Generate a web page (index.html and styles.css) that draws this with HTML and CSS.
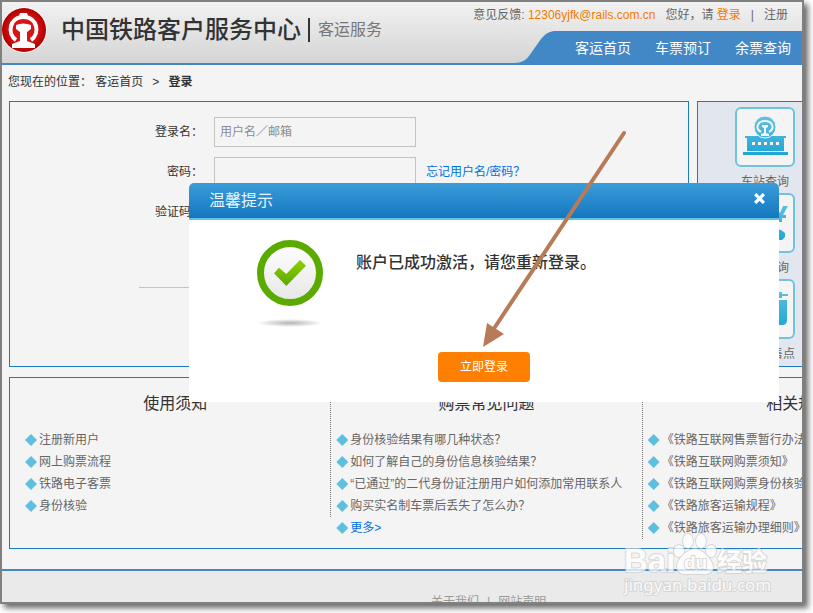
FILE: index.html
```html
<!DOCTYPE html>
<html lang="zh-CN">
<head>
    <meta charset="UTF-8">
    <meta name="viewport" content="width=device-width, initial-scale=1.0">
    <title>登录 | 客运服务</title>
    <link rel="stylesheet" href="styles.css">
</head>
<body>
    <div class="window">
        <header class="header">
            <div class="brand">
                <svg class="logo" viewBox="0 0 46 46" aria-hidden="true">
                    <defs>
                        <radialGradient id="red">
                            <stop offset="0.6" stop-color="#d81414"/>
                            <stop offset="1" stop-color="#b00000"/>
                        </radialGradient>
                    </defs>
                    <circle cx="22" cy="23" r="23" fill="#fff" opacity=".7"/>
                    <circle cx="22" cy="23" r="22" fill="url(#red)"/>
                    <path d="M17 9l1-3h7l1 3z" fill="#fff"/>
                    <path d="M14 33C5 27 7 10 21.500 10S38 27 29 33" fill="none" stroke="#fff" stroke-width="4"/>
                    <path d="M14 18q7-3 15 0v4l-4 3v9l8 3v4H10v-4l8-3v-9l-4-3z" fill="#fff"/>
                </svg>
                <h1>中国铁路客户服务中心</h1>
                <span class="sub">客运服务</span>
            </div>
            <div class="header-right">
                <div class="topline">
                    <span>意见反馈: <a href="mailto:12306yjfk@rails.com.cn">12306yjfk@rails.com.cn</a></span>
                    <span>您好，请 <a href="#">登录</a></span>
                    <span class="bar">|</span>
                    <a class="plain" href="#">注册</a>
                </div>
                <div class="nav-wrap">
                    <svg class="curve" viewBox="0 0 42 32" aria-hidden="true">
                        <path d="M0 32C8 32 12 29 15 25L27 8C32 2 36 0 42 0V32z" fill="#4288c6"/>
                    </svg>
                    <nav class="nav">
                        <a href="#">客运首页</a>
                        <a href="#">车票预订</a>
                        <a href="#">余票查询</a>
                    </nav>
                </div>
            </div>
        </header>

        <div class="crumbs">您现在的位置： <a href="#">客运首页</a><span class="arrow">&gt;</span><strong>登录</strong></div>

        <main class="content">
            <div class="top">
                <form class="login">
                    <div class="row">
                        <label for="user">登录名：</label>
                        <input type="text" id="user" placeholder="用户名／邮箱">
                    </div>
                    <div class="row">
                        <label for="pwd">密码：</label>
                        <input type="password" id="pwd">
                        <a href="#">忘记用户名/密码？</a>
                    </div>
                    <div class="row">
                        <label for="code">验证码：</label>
                        <input type="text" id="code">
                    </div>
                    <hr>
                </form>
                <aside class="side">
                    <a class="tile" href="#">
                        <svg viewBox="0 0 56 56" aria-hidden="true">
                            <defs>
                                <linearGradient id="sky" gradientUnits="userSpaceOnUse" x1="0" y1="8" x2="0" y2="48">
                                    <stop offset="0" stop-color="#62c0df"/>
                                    <stop offset="1" stop-color="#1ba5d5"/>
                                </linearGradient>
                            </defs>
                            <g fill="url(#sky)">
                                <path d="M8 27h41v2h-2v13H10V29H8z"/>
                                <path d="M6 43h45v3H6z"/>
                                <circle cx="28" cy="18" r="11" stroke="#f4f4f4" stroke-width="1"/>
                            </g>
                            <path d="M24 23c-6-3-4-11 4-11s10 8 4 11" fill="none" stroke="#f4f4f4" stroke-width="2"/>
                            <path d="M25 16h6v2l-2 1v5l3 1v2h-8v-2l3-1v-5l-2-1z" fill="#f4f4f4"/>
                            <path d="M15 33h3v3h-3zM21 33h3v3h-3zM27 33h3v3h-3zM33 33h3v3h-3zM39 33h3v3h-3z" fill="#f4f4f4"/>
                        </svg>
                        <span>车站查询</span>
                    </a>
                    <a class="tile" href="#">
                        <svg viewBox="0 0 56 56" aria-hidden="true">
                            <path d="M33 11h5l5 7 3-7h5l-5 9h3v3h-4v4h-5v-4h-5v-3h3z" fill="url(#sky)"/>
                            <path d="M8 14h20v26H8z" fill="url(#sky)"/>
                            <path d="M38 34l6 1 4 3v4l-3 3h-7z" fill="url(#sky)"/>
                        </svg>
                        <span>票价查询</span>
                    </a>
                    <a class="tile" href="#">
                        <svg viewBox="0 0 56 56" aria-hidden="true">
                            <path d="M8 14h34v-3h3v2h6v2h-6v2h-3v-1H8z" fill="url(#sky)"/>
                            <path d="M8 19h42v20q0 5-5 5H13q-5 0-5-5z" fill="url(#sky)"/>
                        </svg>
                        <span>客票代售点</span>
                    </a>
                </aside>
            </div>

            <div class="notes">
                <section class="col">
                    <h2>使用须知</h2>
                    <ul>
                        <li><a href="#">注册新用户</a></li>
                        <li><a href="#">网上购票流程</a></li>
                        <li><a href="#">铁路电子客票</a></li>
                        <li><a href="#">身份核验</a></li>
                    </ul>
                </section>
                <section class="col">
                    <h2>购票常见问题</h2>
                    <ul>
                        <li><a href="#">身份核验结果有哪几种状态？</a></li>
                        <li><a href="#">如何了解自己的身份信息核验结果？</a></li>
                        <li><a href="#">“已通过”的二代身份证注册用户如何添加常用联系人</a></li>
                        <li><a href="#">购买实名制车票后丢失了怎么办？</a></li>
                        <li><a class="more" href="#">更多&gt;</a></li>
                    </ul>
                </section>
                <section class="col">
                    <h2>相关规章</h2>
                    <ul>
                        <li><a href="#">《铁路互联网售票暂行办法》</a></li>
                        <li><a href="#">《铁路互联网购票须知》</a></li>
                        <li><a href="#">《铁路互联网购票身份核验须知》</a></li>
                        <li><a href="#">《铁路旅客运输规程》</a></li>
                        <li><a href="#">《铁路旅客运输办理细则》</a></li>
                    </ul>
                </section>
            </div>
        </main>

        <footer class="footer">
            <a href="#">关于我们</a><span>|</span><a href="#">网站声明</a>
        </footer>

        <!-- 激活成功提示框 -->
        <div class="dialog" role="dialog" aria-labelledby="dialog-title">
            <div class="dialog-head">
                <h2 id="dialog-title">温馨提示</h2>
                <button type="button" class="close" aria-label="关闭">
                    <svg viewBox="0 0 10 10" aria-hidden="true"><path d="M1 1l8 8M9 1L1 9" stroke="#fff" stroke-width="3"/></svg>
                </button>
            </div>
            <div class="dialog-body">
                <div class="result">
                    <svg class="ok" viewBox="0 0 66 88" aria-hidden="true">
                        <defs>
                            <linearGradient id="disc" x2="0" y2="1">
                                <stop offset="0" stop-color="#fff"/>
                                <stop offset="1" stop-color="#e6e6e6"/>
                            </linearGradient>
                            <linearGradient id="tick" x2="0" y2="1">
                                <stop offset="0" stop-color="#8fd000"/>
                                <stop offset="1" stop-color="#5aa800"/>
                            </linearGradient>
                            <radialGradient id="shade">
                                <stop offset="0" stop-color="#b4b4b4"/>
                                <stop offset="1" stop-color="#fff"/>
                            </radialGradient>
                        </defs>
                        <circle cx="33" cy="33" r="29.5" fill="url(#disc)" stroke="#5aaa00" stroke-width="7"/>
                        <path d="M17 33.300l5-5.600 7.300 6.300L43 20l6 5.700L29.300 46z" fill="url(#tick)"/>
                        <ellipse cx="33" cy="83" rx="33" ry="4" fill="url(#shade)"/>
                    </svg>
                    <p>账户已成功激活，请您重新登录。</p>
                </div>
                <button type="button" class="go">立即登录</button>
            </div>
        </div>

        <svg class="pointer" viewBox="0 0 146 218" aria-hidden="true">
            <path d="M142 3L13 197" stroke="#b97a57" stroke-width="4" stroke-linecap="round"/>
            <path d="M1 217L5 193 22 204z" fill="#b97a57"/>
        </svg>

        <svg class="mark" viewBox="0 0 150 64" aria-hidden="true">
            <g fill="#fff" stroke="#cfcfcf" paint-order="stroke" stroke-width="2" opacity=".75">
                <text class="mark-big" x="1" y="39">Bai</text>
                <ellipse cx="56" cy="18" rx="5" ry="6"/>
                <ellipse cx="65" cy="8" rx="5" ry="7"/>
                <ellipse cx="78" cy="8" rx="5" ry="7"/>
                <ellipse cx="88" cy="18" rx="5" ry="6"/>
                <path d="M72 16c8 0 18 12 18 18 0 6-6 8-11 7H65c-7 1-11-2-11-8 0-6 10-17 18-17z"/>
                <text class="mark-du" x="61" y="36">du</text>
                <text class="mark-cn" x="94" y="38">经验</text>
                <text class="mark-url" x="1" y="58">jingyan.baidu.com</text>
            </g>
        </svg>
    </div>
</body>
</html>
```
FILE: styles.css
```css
* {
    box-sizing: border-box;
}
body {
    margin: 0;
    padding: 0 9px 9px 0;
    background: #fff;
    color: #333;
    font: 12px/22px "Liberation Sans", "Noto Sans CJK SC", sans-serif;
}
a {
    color: inherit;
    text-decoration: none;
}
h1, h2, p, ul {
    margin: 0;
    padding: 0;
}
.window {
    position: relative;
    height: calc(100vh - 9px);
    overflow: hidden;
    border: 2px solid #808080;
    background: #f4f4f4;
    box-shadow: 4px 4px 6px rgba(0, 0, 0, 0.6);
}

/* header */
.header {
    display: flex;
    justify-content: space-between;
    border-bottom: 2px solid #4288c6;
    background: linear-gradient(#f2f2f2, #d4d4d4);
}
.brand {
    display: flex;
    align-items: center;
    padding-bottom: 6px;
}
.logo {
    width: 46px;
    height: 46px;
}
.brand h1 {
    margin-left: 13px;
    font-size: 24px;
    line-height: 24px;
    font-weight: 500;
    white-space: nowrap;
}
.sub {
    margin-left: 7px;
    padding-left: 8px;
    border-left: 2px solid #333;
    color: #777;
    font-size: 16px;
    line-height: 24px;
    white-space: nowrap;
}
.header-right {
    display: flex;
    flex-direction: column;
    align-items: flex-end;
}
.topline {
    display: flex;
    height: 29px;
    padding: 2px 14px 0 0;
    gap: 10px;
    color: #666;
    white-space: nowrap;
}
.topline a {
    color: #f47a00;
}
.topline .plain {
    color: #666;
}
.nav-wrap {
    display: flex;
}
.curve {
    width: 42px;
    height: 32px;
}
.nav {
    display: flex;
    gap: 24px;
    padding: 0 11px 0 19px;
    background: #4288c6;
    color: #fff;
    font-size: 14px;
    line-height: 34px;
    height: 32px;
    white-space: nowrap;
}

.crumbs {
    padding: 6px 6px 8px;
}
.crumbs .arrow {
    margin: 0 9px;
}

/* content is wider than a small window and is cut off on the right */
.content {
    min-width: 960px;
    padding: 0 7px;
}
.top {
    display: grid;
    grid-template-columns: 680px 1fr;
    gap: 8px;
}
.login {
    padding: 15px 0 68px 129px;
    border: 1px solid #1a7bbd;
}
.row {
    display: flex;
    align-items: center;
    margin-bottom: 10px;
}
.row label {
    width: 64px;
    margin-right: 11px;
    text-align: right;
}
.row input {
    width: 202px;
    height: 30px;
    padding: 0 5px;
    border: 1px solid #c3c3bf;
    background: #f4f4f4;
    font: inherit;
}
.row input::placeholder {
    color: #8c8c8c;
}
.row a {
    margin-left: 10px;
}
.row a, .more {
    color: #0070e8;
}
.login hr {
    width: 420px;
    margin: 60px 0 0;
    border: 0;
    border-top: 1px solid #c3c3bf;
}
.side {
    padding: 5px 0 1px 37px;
    border: 1px solid #1a7bbd;
    background: #e2e6ee;
}
.tile {
    display: block;
    width: 60px;
    height: 86px;
    color: #666;
    text-align: center;
    white-space: nowrap;
}
.tile svg {
    display: block;
    width: 60px;
    height: 60px;
    margin-bottom: 4px;
    border: 2px solid #6ec4e0;
    border-radius: 6px;
    background: #f4f4f4;
}

.notes {
    display: grid;
    grid-template-columns: repeat(3, 1fr);
    align-items: start;
    margin-top: 10px;
    padding: 15px 0 9px 10px;
    border: 1px solid #1a7bbd;
}
.col {
    border-right: 1px dotted #777;
}
.col:last-child {
    border-right: 0;
}
.col h2 {
    margin-bottom: 14px;
    font-size: 16px;
    font-weight: normal;
    text-align: center;
}
.col ul {
    padding-left: 5px;
    list-style: none;
    color: #666;
}
.col li {
    display: flex;
    align-items: center;
    gap: 2px;
    white-space: nowrap;
}
.col li::before {
    content: "";
    width: 12px;
    height: 12px;
    background: #5fbfdf;
    clip-path: polygon(50% 0, 100% 50%, 50% 100%, 0 50%);
}
.col .more {
    color: #0070e8;
}

.footer {
    min-height: 80px;
    margin-top: 20px;
    padding: 20px 0 0 429px;
    border-top: 2px solid #4288c6;
    background: #eaeaea;
    color: #999;
}
.footer span {
    margin: 0 8px;
}

/* dialog */
.dialog {
    position: absolute;
    top: 181px;
    left: 187px;
    width: 590px;
    border-radius: 5px 5px 0 0;
    background: #fff;
}
.dialog-head {
    display: flex;
    justify-content: space-between;
    align-items: flex-start;
    padding: 7px 14px 6px 20px;
    border-bottom: 2px solid #5fc3ea;
    border-radius: 5px 5px 0 0;
    background: linear-gradient(#3a9dda, #1576bf);
    color: #e4f6ff;
}
.dialog-head h2 {
    font-size: 16px;
    font-weight: normal;
}
.close {
    width: 11px;
    margin-top: 3px;
    padding: 0;
    border: 0;
    background: none;
}
.close svg {
    display: block;
    height: 11px;
}
.dialog-body {
    padding: 20px 68px;
    text-align: center;
}
.result {
    display: flex;
    gap: 33px;
    text-align: left;
}
.ok {
    width: 66px;
    height: 88px;
}
.result p {
    margin-top: 12px;
    font-size: 16px;
    font-weight: 500;
}
.go {
    width: 92px;
    height: 30px;
    margin-top: 24px;
    border: 0;
    border-radius: 4px;
    background: #ff8000;
    color: #fff;
    font: inherit;
}

.pointer {
    position: absolute;
    top: 128px;
    left: 480px;
    width: 146px;
    height: 218px;
}
.mark {
    position: absolute;
    right: 29px;
    bottom: 5px;
    width: 150px;
    height: 64px;
}
.mark-big {
    font: bold 33px "Liberation Sans", sans-serif;
}
.mark-du {
    font: bold 19px "Liberation Sans", sans-serif;
}
.mark-cn {
    font: bold 25px "Noto Sans CJK SC", sans-serif;
}
.mark-url {
    font: 17px "Noto Sans", sans-serif;
}
```
